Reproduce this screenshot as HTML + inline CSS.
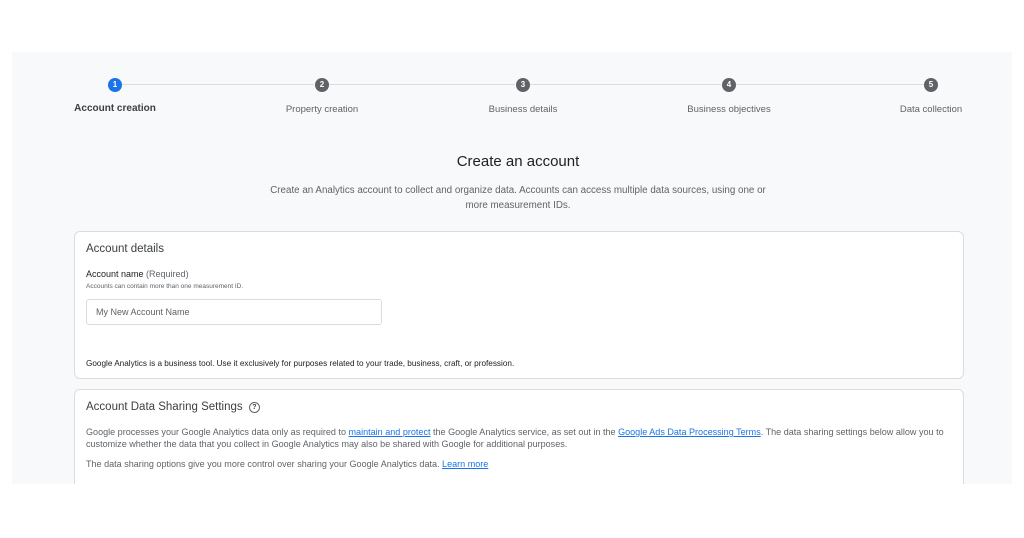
<!DOCTYPE html>
<html><head><meta charset="utf-8"><style>
body{margin:0;width:1024px;height:538px;background:#fff;font-family:"Liberation Sans",sans-serif;position:relative;overflow:hidden;color:#3c4043}
#bg{position:absolute;left:12px;top:52px;width:1000px;height:432px;background:#f8f9fa;overflow:hidden}
.abs{position:absolute}
.line{position:absolute;top:84px;height:1px;background:#dadce0}
.dot{position:absolute;top:78px;width:14px;height:14px;border-radius:50%;background:#5f6368;color:#fff;font-size:8px;font-weight:bold;text-align:center;line-height:14px}
.lbl{position:absolute;top:104px;font-size:9.5px;color:#5f6368;white-space:nowrap;transform:translateX(-50%)}
.card{position:absolute;left:74px;width:888px;background:#fff;border:1px solid #dadce0;border-radius:6px}
a{color:#1a73e8;text-decoration:underline}
</style></head><body>
<div id="bg"></div>
<div class="line" style="left:122px;width:192px"></div>
<div class="line" style="left:329px;width:186px"></div>
<div class="line" style="left:530px;width:191px"></div>
<div class="line" style="left:736px;width:188px"></div>
<div class="dot" style="left:108px;background:#1a73e8">1</div>
<div class="dot" style="left:315px">2</div>
<div class="dot" style="left:516px">3</div>
<div class="dot" style="left:722px">4</div>
<div class="dot" style="left:924px">5</div>
<div class="lbl" style="left:115px;top:103px;font-size:10px;font-weight:bold;color:#3c4043">Account creation</div>
<div class="lbl" style="left:322px">Property creation</div>
<div class="lbl" style="left:523px">Business details</div>
<div class="lbl" style="left:729px">Business objectives</div>
<div class="lbl" style="left:931px">Data collection</div>
<div class="abs" style="left:0;width:1036px;top:153px;text-align:center;font-size:15px;color:#202124">Create an account</div>
<div class="abs" style="left:0;width:1036px;top:183px;text-align:center;font-size:9.8px;line-height:15px;color:#5f6368">Create an Analytics account to collect and organize data. Accounts can access multiple data sources, using one or<br>more measurement IDs.</div>
<div class="card" style="top:231px;height:146px">
<div class="abs" style="left:11px;top:11px;font-size:11.5px;color:#3c4043">Account details</div>
<div class="abs" style="left:11px;top:37px;font-size:9px;color:#202124">Account name <span style="color:#5f6368">(Required)</span></div>
<div class="abs" style="left:11px;top:51px;font-size:6.5px;color:#5f6368">Accounts can contain more than one measurement ID.</div>
<div class="abs" style="left:11px;top:67px;width:294px;height:24px;border:1px solid #dadce0;border-radius:3px"><div style="position:absolute;left:9px;top:7px;font-size:9px;color:#5f6368">My New Account Name</div></div>
<div class="abs" style="left:11px;top:127px;font-size:8.2px;color:#202124">Google Analytics is a business tool. Use it exclusively for purposes related to your trade, business, craft, or profession.</div>
</div>
<div class="card" style="top:389px;height:120px">
<div class="abs" style="left:11px;top:11px;font-size:11.5px;color:#3c4043">Account Data Sharing Settings <span style="display:inline-block;width:9px;height:9px;border:1.3px solid #5f6368;border-radius:50%;font-size:7px;line-height:9px;text-align:center;font-weight:bold;vertical-align:1px;margin-left:3px">?</span></div>
<div class="abs" style="left:11px;top:36px;width:880px;white-space:nowrap;font-size:9.05px;line-height:12px;color:#5f6368">Google processes your Google Analytics data only as required to <a>maintain and protect</a> the Google Analytics service, as set out in the <a>Google Ads Data Processing Terms</a>. The data sharing settings below allow you to<br>customize whether the data that you collect in Google Analytics may also be shared with Google for additional purposes.</div>
<div class="abs" style="left:11px;top:69px;font-size:9.05px;color:#5f6368">The data sharing options give you more control over sharing your Google Analytics data. <a>Learn more</a></div>
</div>
<div class="abs" style="left:0;top:484px;width:1024px;height:54px;background:#fff"></div>
</body></html>
